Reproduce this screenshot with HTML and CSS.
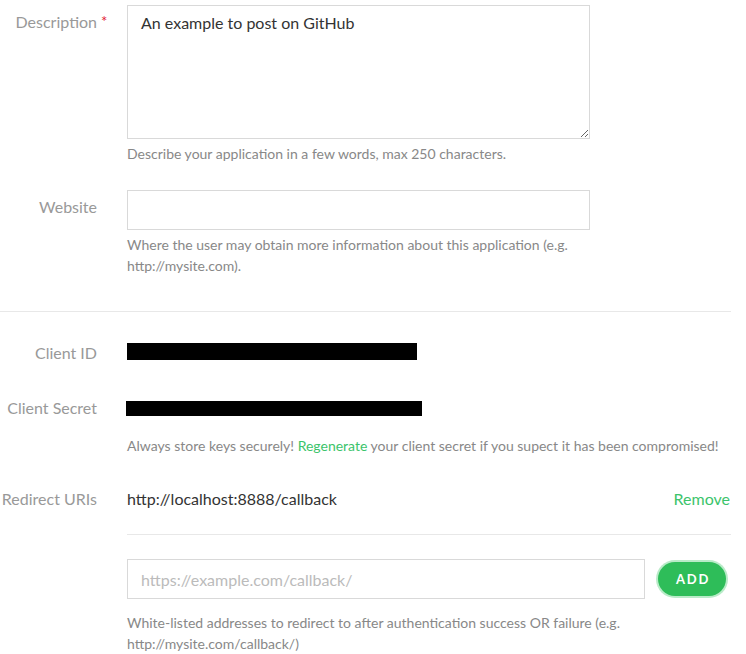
FILE: index.html
```html
<!DOCTYPE html>
<html>
<head>
<meta charset="utf-8">
<link rel="stylesheet" href="styles.css">
</head>
<body>
<div class="page">
  <div class="row row-desc">
    <label class="label label-req">Description<span class="req">*</span></label>
    <div class="field">
      <textarea class="textarea">An example to post on GitHub</textarea>
      <p class="help">Describe your application in a few words, max 250 characters.</p>
    </div>
  </div>
  <div class="row row-web">
    <label class="label label-input">Website</label>
    <div class="field">
      <input class="input input-web" type="text">
      <p class="help">Where the user may obtain more information about this application (e.g. http://mysite.com).</p>
    </div>
  </div>
  <hr class="sep">
  <div class="row row-id">
    <span class="label">Client ID</span>
    <div class="field"><span class="redact redact-id"></span></div>
  </div>
  <div class="row row-secret">
    <span class="label">Client Secret</span>
    <div class="field">
      <span class="redact redact-secret"></span>
    </div>
  </div>
  <div class="row row-secret-help">
    <span></span>
    <p class="help">Always store keys securely! <a class="link">Regenerate</a> your client secret if you supect it has been compromised!</p>
  </div>
  <div class="row row-redirect">
    <span class="label">Redirect URIs</span>
    <div class="field uri-line">
      <span class="uri">http://localhost:8888/callback</span>
      <a class="link remove">Remove</a>
    </div>
  </div>
  <div class="row row-add">
    <span></span>
    <div class="field">
      <hr class="sep sep-inner">
      <div class="add-line">
        <input class="input input-uri" type="text" placeholder="https://example.com/callback/">
        <button class="btn-add">ADD</button>
      </div>
      <p class="help help-uri">White-listed addresses to redirect to after authentication success OR failure (e.g. http://mysite.com/callback/)</p>
    </div>
  </div>
</div>
</body>
</html>
```
FILE: styles.css
```css
html, body {
  margin: 0;
  padding: 0;
  background: #fff;
}
body {
  font-family: Lato, "Noto Sans", sans-serif;
  color: #333;
}
.page {
  width: 731px;
}
.row {
  display: grid;
  grid-template-columns: 97px 1fr;
  column-gap: 30px;
}
.label {
  text-align: right;
  color: #999;
  font-size: 16px;
  line-height: 21px;
  white-space: nowrap;
}
.label-req {
  position: relative;
}
.req {
  position: absolute;
  left: 101px;
  top: 6px;
  color: #e22134;
  font-size: 15px;
}
.field {
  min-width: 0;
}
.help {
  margin: 0;
  font-size: 14px;
  line-height: 21px;
  color: #888;
}
.row-desc {
  padding-top: 5px;
}
.row-desc .label {
  padding-top: 6px;
}
.textarea {
  display: block;
  box-sizing: border-box;
  width: 463px;
  height: 134px;
  margin: 0;
  border: 1px solid #d9d9d9;
  border-radius: 0;
  padding: 6px 13px;
  font-family: inherit;
  font-size: 16px;
  line-height: 21px;
  color: #333;
  resize: vertical;
}
.row-desc .help {
  margin-top: 4px;
}
.row-web {
  margin-top: 26px;
}
.label-input {
  padding-top: 6px;
}
.input {
  display: block;
  box-sizing: border-box;
  height: 40px;
  margin: 0;
  border: 1px solid #d9d9d9;
  border-radius: 0;
  padding: 0 13px;
  font-family: inherit;
  font-size: 16px;
  color: #333;
  outline: none;
}
.input::placeholder {
  color: #bbb;
}
.input-web {
  width: 463px;
}
.row-web .help {
  margin-top: 4px;
  width: 463px;
}
.sep {
  margin: 35px 0 0;
  border: 0;
  border-top: 1px solid #e8e8e8;
  height: 0;
}
.row-id {
  margin-top: 30px;
}
.redact {
  display: inline-block;
  background: #000;
  vertical-align: top;
}
.redact-id {
  width: 290px;
  height: 17px;
  margin-top: 1px;
}
.row-secret {
  margin-top: 34px;
}
.redact-secret {
  width: 296px;
  height: 15px;
  margin-top: 4px;
  margin-left: -1px;
}
.row-secret-help {
  margin-top: 17px;
}
.link {
  color: #3cc46b;
  text-decoration: none;
}
.row-redirect {
  margin-top: 32px;
}
.uri-line {
  display: flex;
  justify-content: space-between;
  font-size: 16px;
  line-height: 21px;
}
.uri {
  color: #333;
}
.remove {
  margin-right: 1px;
}
.sep-inner {
  margin-top: 25px;
}
.add-line {
  display: flex;
  align-items: center;
  gap: 13px;
  margin-top: 24px;
}
.input-uri {
  width: 518px;
}
.btn-add {
  box-sizing: border-box;
  width: 68px;
  height: 34px;
  border: 0;
  border-radius: 17px;
  background: #2ebd59;
  color: #fff;
  font-family: inherit;
  font-weight: 700;
  font-size: 13px;
  letter-spacing: 1.8px;
  padding: 0 0 0 2px;
  box-shadow: 0 0 0 2px #b9ebc8;
}
.help-uri {
  margin-top: 13px;
}
```
